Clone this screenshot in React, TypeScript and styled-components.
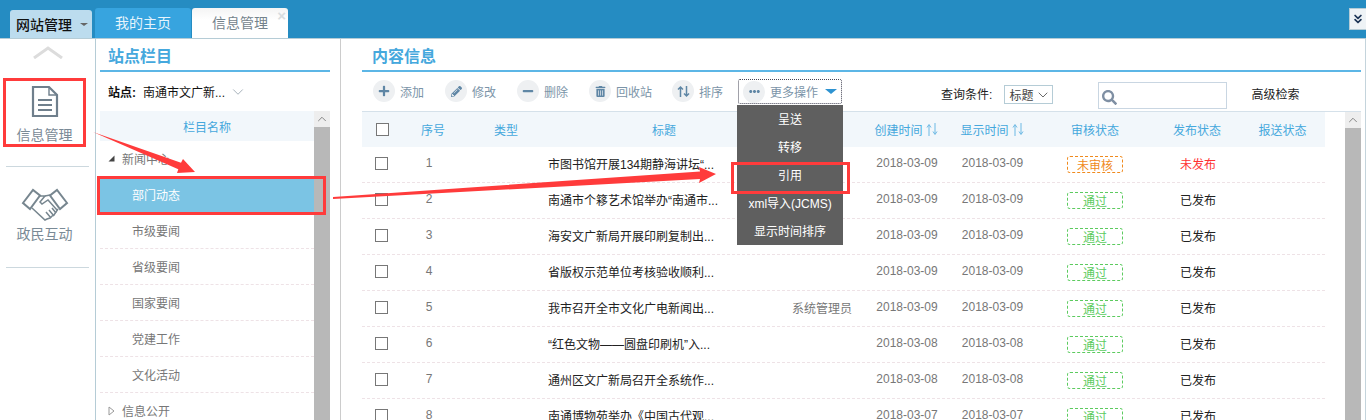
import React from 'react';
import styled, { createGlobalStyle } from 'styled-components';
import { FaPlus, FaMinus, FaPencilAlt, FaTrashAlt, FaEllipsisH, FaSearch } from 'react-icons/fa';
import { ChevronDown, ChevronUp, ChevronsDown } from 'lucide-react';

const FONT = '"Liberation Sans", "Noto Sans CJK SC", sans-serif';

const GlobalStyle = createGlobalStyle`
  html, body {
    margin: 0;
    padding: 0;
    height: 100%;
    overflow: hidden;
    background: #fff;
    font-family: ${FONT};
    font-size: 12px;
  }
`;

const Page = styled.div`
  position: relative;
  width: 1366px;
  height: 420px;
  overflow: hidden;
  display: flex;
  flex-direction: column;
`;

/* top bar */
const TopBar = styled.div`
  flex: none;
  height: 38px;
  box-sizing: content-box;
  border-bottom: 1px solid #b5ccd6;
  background: #258cc2;
  display: flex;
  align-items: flex-end;
  padding-left: 10px;
`;

const SiteMenu = styled.div`
  width: 82px;
  height: 28px;
  background: #bcdcee;
  border-radius: 3px 3px 0 0;
  display: flex;
  align-items: center;
  padding-left: 6px;
  box-sizing: border-box;
  gap: 8px;
  font-size: 14px;
  font-weight: 500;
  color: #111;
  margin-right: 3px;
`;

const Caret = styled.span<{ $color: string; $size: number }>`
  display: inline-block;
  width: 0;
  height: 0;
  border-left: ${({ $size }) => $size}px solid transparent;
  border-right: ${({ $size }) => $size}px solid transparent;
  border-top: ${({ $size }) => $size - 1}px solid ${({ $color }) => $color};
`;

const Tab = styled.div<{ $active?: boolean }>`
  position: relative;
  width: 96px;
  height: 30px;
  margin-right: 1px;
  padding-bottom: 3px;
  box-sizing: border-box;
  display: flex;
  align-items: center;
  justify-content: center;
  border-radius: 3px 3px 0 0;
  font-size: 14px;
  color: ${({ $active }) => ($active ? '#74838c' : '#e6f4fc')};
  background: ${({ $active }) => ($active ? 'linear-gradient(#f4f4f4, #fff 40%)' : '#37a4df')};
`;

const TabClose = styled.span`
  position: absolute;
  top: 1px;
  right: 2px;
  font-size: 15px;
  font-weight: 700;
  line-height: 13px;
  color: #d8dde0;
`;

const CollapseButton = styled.div`
  margin-left: auto;
  align-self: flex-start;
  margin-top: 8px;
  width: 17px;
  height: 22px;
  box-sizing: border-box;
  background: #eef3f6;
  border: 1px solid #b5ccd6;
  border-right: none;
  display: flex;
  align-items: center;
  justify-content: center;
  color: #1d3557;
`;

const Body = styled.div`
  flex: 1;
  min-height: 0;
  display: flex;
`;

/* first column */
const NavRail = styled.div`
  flex: none;
  width: 95px;
  box-sizing: content-box;
  border-right: 1px solid #b5ccd6;
  padding-top: 1px;
  display: flex;
  flex-direction: column;
  align-items: center;
`;

const NavUp = styled.div`
  height: 36px;
  display: flex;
  align-items: flex-start;
  padding-top: 6px;
  box-sizing: border-box;
`;

const NavItem = styled.div<{ $height: number }>`
  width: 83px;
  height: ${({ $height }) => $height}px;
  box-sizing: border-box;
  border-bottom: 1px solid #ccd8de;
  display: flex;
  flex-direction: column;
  align-items: center;
`;

const NavIcon = styled.div<{ $top: number }>`
  height: 34px;
  margin-top: ${({ $top }) => $top}px;
  margin-left: -6px;
`;

const NavLabel = styled.div<{ $top: number }>`
  margin-top: ${({ $top }) => $top}px;
  margin-left: -6px;
  font-size: 14px;
  line-height: 18px;
  color: #7a8a96;
`;

/* second column */
const TreePanel = styled.div`
  flex: none;
  width: 245px;
  box-sizing: border-box;
  border-right: 1px solid #ccc;
  padding: 0 10px 0 4px;
`;

const PanelTitle = styled.div<{ $indent: number }>`
  height: 33px;
  box-sizing: border-box;
  border-bottom: 2px solid #5cb6e6;
  padding: 8px 0 0 ${({ $indent }) => $indent}px;
  font-size: 16px;
  line-height: 20px;
  font-weight: 700;
  color: #45a8dd;
`;

const SiteRow = styled.div`
  height: 39px;
  display: flex;
  align-items: center;
  padding-left: 8px;
  color: #111;
  font-size: 12px;
`;

const SiteLabel = styled.b`
  margin-right: 7px;
`;

const SiteChevron = styled.span`
  margin-left: 4px;
  display: flex;
  color: #8a98a4;
`;

const TreeArea = styled.div`
  display: flex;
  height: 309px;
`;

const TreeList = styled.div`
  flex: 1;
`;

const TreeHead = styled.div`
  height: 30px;
  background: #f2f7fb;
  display: flex;
  align-items: center;
  justify-content: center;
  color: #45a8dd;
`;

const TreeGroup = styled.div`
  height: 36px;
  padding-bottom: 1px;
  box-sizing: border-box;
  display: flex;
  align-items: center;
  padding-left: 8px;
  color: #777;
`;

const TreeToggle = styled.span`
  width: 14px;
  display: flex;
`;

const TreeLeaf = styled.div<{ $selected?: boolean }>`
  height: 36px;
  box-sizing: border-box;
  display: flex;
  align-items: center;
  padding-left: 32px;
  color: ${({ $selected }) => ($selected ? '#fff' : '#777')};
  background: ${({ $selected }) => ($selected ? '#7bc4e4' : 'transparent')};
  border-bottom: 1px dashed ${({ $selected }) => ($selected ? 'transparent' : '#eee2e6')};
`;

const Scrollbar = styled.div`
  flex: none;
  width: 16px;
  background: #b8b8b8;
`;

const ScrollUp = styled.div`
  height: 16px;
  background: #eee;
  display: flex;
  align-items: center;
  justify-content: center;
  color: #777;
`;

/* main column */
const Main = styled.div`
  flex: 1;
  min-width: 0;
  box-sizing: border-box;
  border-right: 1px solid #c4d4dc;
  padding: 0 4px 0 21px;
`;

const Toolbar = styled.div`
  height: 40px;
  box-sizing: border-box;
  border-bottom: 1px solid #d5e1ea;
  display: flex;
  align-items: flex-start;
  padding: 7px 0 0 11px;
  position: relative;
`;

const ToolButton = styled.div<{ $gap: number }>`
  display: flex;
  align-items: center;
  gap: 5px;
  height: 24px;
  margin-right: ${({ $gap }) => $gap}px;
  color: #7b94a8;
`;

const MoreWrap = styled.div`
  position: relative;
`;

const MoreButton = styled.div`
  display: flex;
  align-items: center;
  gap: 5px;
  width: 104px;
  height: 25px;
  box-sizing: border-box;
  border: 1px dotted #445;
  border-radius: 2px;
  padding-left: 4px;
  color: #7b94a8;
`;

const MoreCaret = styled.span`
  margin-left: 2px;
  display: flex;
`;

const ToolIcon = styled.span`
  width: 22px;
  height: 22px;
  border-radius: 50%;
  background: #eef0f2;
  color: #5f86a5;
  display: flex;
  align-items: center;
  justify-content: center;
`;

const Menu = styled.div`
  position: absolute;
  z-index: 2;
  left: -1px;
  top: 26px;
  width: 106px;
  background: #5f5f5f;
`;

const MenuItem = styled.div`
  height: 28px;
  padding-bottom: 2px;
  box-sizing: border-box;
  display: flex;
  align-items: center;
  justify-content: center;
  color: #fff;
  white-space: nowrap;
`;

const QueryLabel = styled.div`
  margin-left: 99px;
  margin-top: 7px;
  line-height: 18px;
  color: #222;
`;

const SelectBox = styled.div`
  margin-left: 12px;
  margin-top: 6px;
  width: 49px;
  height: 19px;
  box-sizing: border-box;
  border: 1px solid #b5ccd6;
  display: flex;
  align-items: center;
  justify-content: space-between;
  padding: 0 1px 0 4px;
  color: #444;
`;

const SearchBox = styled.div`
  margin-left: 45px;
  margin-top: 3px;
  width: 129px;
  height: 27px;
  box-sizing: border-box;
  border: 1px solid #c9d6e2;
  display: flex;
  align-items: center;
  padding: 3px 0 0 3px;
  color: #7f8fa3;
`;

const AdvancedLink = styled.div`
  margin-left: 24px;
  margin-top: 7px;
  line-height: 18px;
  color: #222;
`;

const TableArea = styled.div`
  display: flex;
  justify-content: space-between;
  height: 308px;
`;

const Table = styled.div`
  width: 963px;
`;

const HEAD_COLS = '40px 62px 84px 232px 84px 84px 88px 118px 86px 85px';
const BODY_COLS = '38px 58px 90px 232px 84px 86px 85px 120px 86px 84px';

const HeadRow = styled.div`
  display: grid;
  grid-template-columns: ${HEAD_COLS};
  height: 35px;
  background: #f2f7fb;
  color: #45a8dd;
`;

const HeadCell = styled.div`
  display: flex;
  align-items: center;
  justify-content: center;
  gap: 3px;
`;

const Row = styled.div`
  display: grid;
  grid-template-columns: ${BODY_COLS};
  height: 36px;
  box-sizing: border-box;
  border-bottom: 1px dashed #eee2e6;
  color: #777;
  padding-bottom: 3px;
`;

const Cell = styled.div`
  display: flex;
  align-items: center;
  justify-content: center;
  white-space: nowrap;
`;

const TitleCell = styled(Cell)`
  justify-content: flex-start;
  color: #222;
`;

const Checkbox = styled.span`
  width: 13px;
  height: 13px;
  box-sizing: border-box;
  border: 1px solid #777;
  background: #fff;
`;

const RowCheckbox = styled(Checkbox)`
  margin-top: 1px;
`;

const Badge = styled.span<{ $color: string }>`
  width: 56px;
  height: 17px;
  margin-top: 2px;
  box-sizing: border-box;
  border: 1px dashed ${({ $color }) => $color};
  border-radius: 3px;
  display: flex;
  align-items: center;
  justify-content: center;
  color: ${({ $color }) => $color};
`;

const Published = styled.span<{ $off?: boolean }>`
  color: ${({ $off }) => ($off ? '#f33' : '#222')};
`;

const MainScroll = styled(Scrollbar)`
  height: 308px;
`;

/* red marks drawn on top of the screenshot */
const Mark = styled.div<{ $x: number; $y: number; $w: number; $h: number }>`
  position: absolute;
  z-index: 3;
  left: ${({ $x }) => $x}px;
  top: ${({ $y }) => $y}px;
  width: ${({ $w }) => $w}px;
  height: ${({ $h }) => $h}px;
  box-sizing: border-box;
  border: 3px solid #ff3b3b;
`;

const ArrowLayer = styled.svg`
  position: absolute;
  z-index: 4;
  left: 0;
  top: 0;
  pointer-events: none;
`;

const RailChevron = () => (
  <svg width="30" height="13" viewBox="0 0 30 13" fill="none" stroke="#dcdcdc" strokeWidth="3">
    <path d="M1 12 15 2l14 10" />
  </svg>
);

const DocIcon = () => (
  <svg width="28" height="33" viewBox="0 0 28 33" fill="none" stroke="#6f7f8c" strokeWidth="2.2">
    <path d="M2 2h16l8 8v21H2z" />
    <path d="M18 2v8h8" strokeWidth="1.4" />
    <path d="M7 15h14M7 20h14M7 25h14" />
  </svg>
);

const HandshakeIcon = () => (
  <svg width="48" height="34" viewBox="0 0 48 34" fill="none" stroke="#77868f" strokeWidth="1.5">
    <path d="M2 15 12 2l7 5.5L9 21z" strokeWidth="2" />
    <path d="M46 15 36 2l-7 5.5L39 21z" strokeWidth="2" />
    <path d="M11 20 24 32l2-1 3-1 2-2 2-1 4-6" />
    <path d="M19 8h5l-5 6 2 2 6-4 9 10" />
    <path d="M24 8l5-1" />
    <path d="M25 24l5 6M28 22l5 6M31 20l4 5" />
  </svg>
);

const SortIcon = () => (
  <svg width="13" height="13" viewBox="0 0 13 13" fill="none" stroke="#5f86a5" strokeWidth="1.5">
    <path d="M3.5 12V2M1 4.5 3.5 2 6 4.5" />
    <path d="M9.5 1v10M7 8.5 9.5 11 12 8.5" />
  </svg>
);

const HeadSort = () => (
  <svg width="12" height="13" viewBox="0 0 12 13" fill="none" stroke="#6db9e4" strokeWidth="1">
    <path d="M3 13V2M1 4.5 3 1.5l2 3" />
    <path d="M9 0v11M7 8.5l2 3 2-3" />
  </svg>
);

const TreeOpen = () => (
  <svg width="7" height="7" viewBox="0 0 7 7">
    <path d="M6.5 0.5v6h-6z" fill="#444" />
  </svg>
);

const TreeClosed = () => (
  <svg width="7" height="10" viewBox="0 0 7 10" fill="none" stroke="#999">
    <path d="M1 1l5 4-5 4z" />
  </svg>
);

const leaves = ['市级要闻', '省级要闻', '国家要闻', '党建工作', '文化活动'];

const tools = [
  { label: '添加', icon: <FaPlus size={12} />, gap: 21 },
  { label: '修改', icon: <FaPencilAlt size={11} />, gap: 21 },
  { label: '删除', icon: <FaMinus size={12} />, gap: 21 },
  { label: '回收站', icon: <FaTrashAlt size={11} />, gap: 20 },
  { label: '排序', icon: <SortIcon />, gap: 15 },
];

const menuItems = ['呈送', '转移', '引用', 'xml导入(JCMS)', '显示时间排序'];

const rows = [
  { no: 1, title: '市图书馆开展134期静海讲坛“...', date: '2018-03-09', pending: true },
  { no: 2, title: '南通市个簃艺术馆举办“南通市...', date: '2018-03-09' },
  { no: 3, title: '海安文广新局开展印刷复制出...', date: '2018-03-09' },
  { no: 4, title: '省版权示范单位考核验收顺利...', date: '2018-03-09' },
  { no: 5, title: '我市召开全市文化广电新闻出...', date: '2018-03-09', author: '系统管理员' },
  { no: 6, title: '“红色文物——圆盘印刷机”入...', date: '2018-03-08' },
  { no: 7, title: '通州区文广新局召开全系统作...', date: '2018-03-08' },
  { no: 8, title: '南通博物苑举办《中国古代观...', date: '2018-03-07' },
];

export default function App() {
  return (
    <Page>
      <GlobalStyle />
      <TopBar>
        <SiteMenu>
          网站管理
          <Caret $color="#666" $size={4} />
        </SiteMenu>
        <Tab>我的主页</Tab>
        <Tab $active>
          信息管理
          <TabClose>×</TabClose>
        </Tab>
        <CollapseButton>
          <ChevronsDown size={14} strokeWidth={3} />
        </CollapseButton>
      </TopBar>

      <Body>
        <NavRail>
          <NavUp>
            <RailChevron />
          </NavUp>
          <NavItem $height={91}>
            <NavIcon $top={9}>
              <DocIcon />
            </NavIcon>
            <NavLabel $top={7}>信息管理</NavLabel>
          </NavItem>
          <NavItem $height={101}>
            <NavIcon $top={21}>
              <HandshakeIcon />
            </NavIcon>
            <NavLabel $top={3}>政民互动</NavLabel>
          </NavItem>
        </NavRail>

        <TreePanel>
          <PanelTitle $indent={8}>站点栏目</PanelTitle>
          <SiteRow>
            <SiteLabel>站点:</SiteLabel>
            南通市文广新...
            <SiteChevron>
              <ChevronDown size={18} strokeWidth={1} />
            </SiteChevron>
          </SiteRow>
          <TreeArea>
            <TreeList>
              <TreeHead>栏目名称</TreeHead>
              <TreeGroup>
                <TreeToggle>
                  <TreeOpen />
                </TreeToggle>
                新闻中心
              </TreeGroup>
              <TreeLeaf $selected>部门动态</TreeLeaf>
              {leaves.map((name) => (
                <TreeLeaf key={name}>{name}</TreeLeaf>
              ))}
              <TreeGroup>
                <TreeToggle>
                  <TreeClosed />
                </TreeToggle>
                信息公开
              </TreeGroup>
            </TreeList>
            <Scrollbar>
              <ScrollUp>
                <ChevronUp size={14} strokeWidth={1.5} />
              </ScrollUp>
            </Scrollbar>
          </TreeArea>
        </TreePanel>

        <Main>
          <PanelTitle $indent={10}>内容信息</PanelTitle>
          <Toolbar>
            {tools.map((tool) => (
              <ToolButton key={tool.label} $gap={tool.gap}>
                <ToolIcon>{tool.icon}</ToolIcon>
                {tool.label}
              </ToolButton>
            ))}
            <MoreWrap>
              <MoreButton>
                <ToolIcon>
                  <FaEllipsisH size={11} />
                </ToolIcon>
                更多操作
                <MoreCaret>
                  <Caret $color="#2e93d1" $size={6} />
                </MoreCaret>
              </MoreButton>
              <Menu>
                {menuItems.map((item) => (
                  <MenuItem key={item}>{item}</MenuItem>
                ))}
              </Menu>
            </MoreWrap>
            <QueryLabel>查询条件:</QueryLabel>
            <SelectBox>
              标题
              <ChevronDown size={16} strokeWidth={1.2} />
            </SelectBox>
            <SearchBox>
              <FaSearch size={15} />
            </SearchBox>
            <AdvancedLink>高级检索</AdvancedLink>
          </Toolbar>

          <TableArea>
            <Table>
              <HeadRow>
                <HeadCell>
                  <Checkbox />
                </HeadCell>
                <HeadCell>序号</HeadCell>
                <HeadCell>类型</HeadCell>
                <HeadCell>标题</HeadCell>
                <HeadCell>创建人</HeadCell>
                <HeadCell>
                  创建时间
                  <HeadSort />
                </HeadCell>
                <HeadCell>
                  显示时间
                  <HeadSort />
                </HeadCell>
                <HeadCell>审核状态</HeadCell>
                <HeadCell>发布状态</HeadCell>
                <HeadCell>报送状态</HeadCell>
              </HeadRow>
              {rows.map((row) => (
                <Row key={row.no}>
                  <Cell>
                    <RowCheckbox />
                  </Cell>
                  <Cell>{row.no}</Cell>
                  <Cell />
                  <TitleCell>{row.title}</TitleCell>
                  <Cell>{row.author}</Cell>
                  <Cell>{row.date}</Cell>
                  <Cell>{row.date}</Cell>
                  <Cell>
                    {row.pending ? <Badge $color="#f08a1d">未审核</Badge> : <Badge $color="#5ccb5f">通过</Badge>}
                  </Cell>
                  <Cell>
                    {row.pending ? <Published $off>未发布</Published> : <Published>已发布</Published>}
                  </Cell>
                  <Cell />
                </Row>
              ))}
            </Table>
            <MainScroll>
              <ScrollUp>
                <ChevronUp size={14} strokeWidth={1.5} />
              </ScrollUp>
            </MainScroll>
          </TableArea>
        </Main>
      </Body>

      <Mark $x={3} $y={78} $w={83} $h={69} />
      <Mark $x={97} $y={176} $w={229} $h={39} />
      <Mark $x={731} $y={162} $w={119} $h={32} />
      <ArrowLayer width="1366" height="420" viewBox="0 0 1366 420">
        <path d="M93 132 181 162.8 183 159 195 172 177 173 178.3 169.2z" fill="#ff3b3b" />
        <path d="M333 197 700 171.5 699 167 716 174 699 183 700 179 333 199z" fill="#ff3b3b" />
      </ArrowLayer>
    </Page>
  );
}
